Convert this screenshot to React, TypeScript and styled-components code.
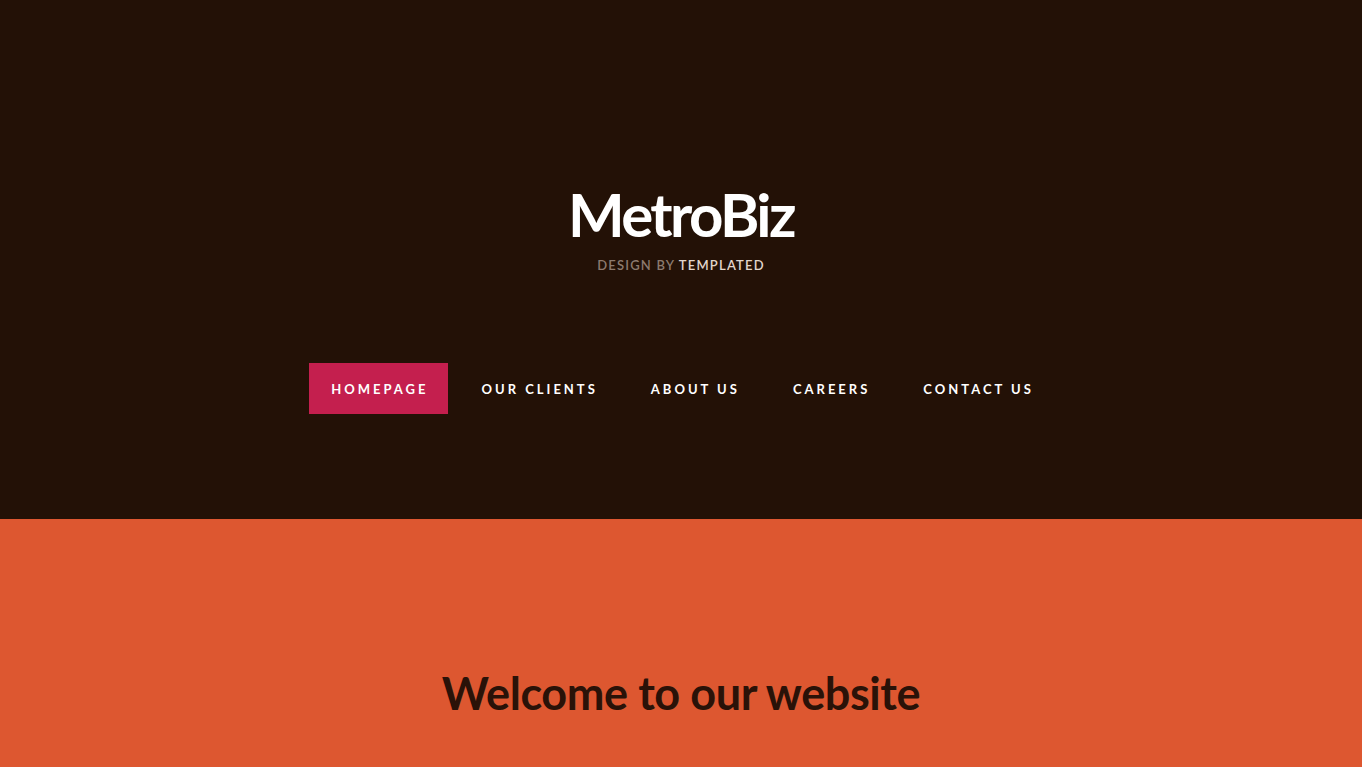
import React from "react";
import styled, { createGlobalStyle } from "styled-components";

const Global = createGlobalStyle`
  html, body { margin: 0; padding: 0; background: #dd5730; }
  body { font-family: Lato, "Open Sans", sans-serif; }
  * { box-sizing: border-box; }
`;

const Header = styled.header`
  background: #231106;
  height: 519px;
  display: flex;
  flex-direction: column;
  align-items: center;
  padding-top: 178px;
`;

const Logo = styled.h1`
  margin: 0;
  font-size: 60px;
  line-height: 72px;
  font-weight: 700;
  color: #fff;
  letter-spacing: -2.6px;
`;

const Tagline = styled.p`
  margin: 6px 0 0;
  font-size: 13px;
  line-height: 18px;
  letter-spacing: 1.2px;
  text-transform: uppercase;
  font-weight: 600;
  color: #8c7a6e;
`;

const Strong = styled.span`
  color: #e2d6cc;
`;

const Nav = styled.ul`
  list-style: none;
  margin: 89px 0 0;
  padding: 0;
  display: flex;
  gap: 12px;
`;

const NavItem = styled.li<{ $active?: boolean }>`
  height: 51px;
  padding: 0 19px 0 22px;
  display: flex;
  align-items: center;
  background: ${(p) => (p.$active ? "#c41f4e" : "transparent")};
  color: #fff;
  font-size: 13px;
  font-weight: 700;
  letter-spacing: 3px;
  text-transform: uppercase;
`;

const Main = styled.section`
  background: #dd5730;
  display: flex;
  justify-content: center;
  padding-top: 146px;
  height: 248px;
`;

const Title = styled.h2`
  margin: 0;
  font-size: 45px;
  line-height: 56px;
  font-weight: 700;
  color: #2a1208;
  letter-spacing: -0.4px;
`;

export default function App() {
  const items = ["Homepage", "Our Clients", "About Us", "Careers", "Contact Us"];
  return (
    <>
      <Global />
      <Header>
        <Logo>MetroBiz</Logo>
        <Tagline>
          Design by <Strong>Templated</Strong>
        </Tagline>
        <Nav>
          {items.map((t, i) => (
            <NavItem key={t} $active={i === 0}>
              {t}
            </NavItem>
          ))}
        </Nav>
      </Header>
      <Main>
        <Title>Welcome to our website</Title>
      </Main>
    </>
  );
}
